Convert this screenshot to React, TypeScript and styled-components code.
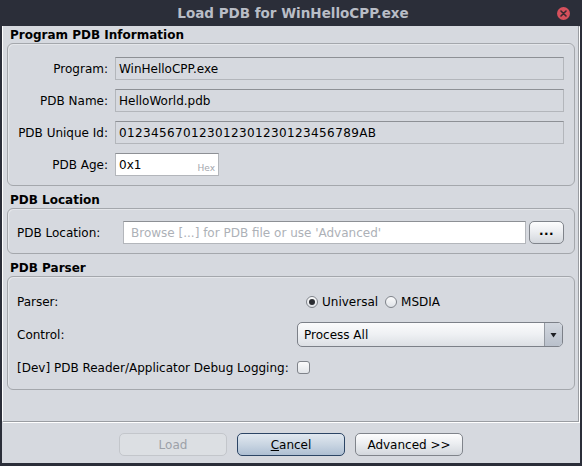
import React from 'react';
import styled, { createGlobalStyle, css } from 'styled-components';

const PANEL_BG = '#d6d9df';

const GlobalStyle = createGlobalStyle`
  html, body {
    margin: 0;
    padding: 0;
    background: #2b2e39;
    overflow: hidden;
  }
  body {
    font-family: "DejaVu Sans", "Liberation Sans", sans-serif;
    font-size: 12px;
    color: #000;
  }
`;

const Window = styled.div`
  width: 582px;
  height: 466px;
  box-sizing: border-box;
  padding: 0 2px 3px 2px;
  background: #2b2e39;
  display: flex;
  flex-direction: column;
`;

const TitleBar = styled.div`
  position: relative;
  flex: none;
  height: 26px;
  display: flex;
  align-items: center;
  justify-content: center;
  padding-left: 4px;
  color: #b9bdc6;
  font-weight: bold;
  font-size: 13.5px;
`;

const CloseButton = styled.div`
  position: absolute;
  right: 10px;
  top: 7px;
  width: 13px;
  height: 13px;
  border-radius: 50%;
  background: #d6505c;
  display: flex;
  align-items: center;
  justify-content: center;
`;

const Body = styled.div`
  flex: 1;
  background: ${PANEL_BG};
  display: flex;
  flex-direction: column;
`;

const Content = styled.div`
  width: 577px;
  height: 396px;
  box-sizing: border-box;
  border-left: 1px solid #fff;
  border-right: 1px solid #9a9da2;
  border-bottom: 1px solid #9a9da2;
  box-shadow: 1px 1px 0 #fff;
  padding: 0 3px 0 4px;
  display: flex;
  flex-direction: column;
`;

const Section = styled.div`
  display: flex;
  flex-direction: column;
  & + & {
    margin-top: 5px;
  }
`;

const SectionTitle = styled.div`
  height: 17px;
  line-height: 18px;
  padding-left: 3px;
  font-weight: bold;
`;

const Panel = styled.div<{ $padTop: number }>`
  border: 1px solid #a4a7ac;
  border-radius: 6px;
  padding: ${(p) => p.$padTop}px 10px 9px 9px;
  box-shadow: inset 1px 1px 0 rgba(255, 255, 255, 0.35);
`;

const InfoGrid = styled.div`
  display: grid;
  grid-template-columns: 91px 1fr;
  column-gap: 7px;
  row-gap: 9px;
  align-items: center;
`;

const Label = styled.div<{ $align?: 'left' | 'right' }>`
  text-align: ${(p) => p.$align ?? 'left'};
  white-space: nowrap;
  padding-top: 1px;
`;

const fieldBase = css`
  height: 23px;
  box-sizing: border-box;
  border: 1px solid #b3b6bb;
  border-top-color: #8d9095;
  padding: 1px 3px 0 3px;
  line-height: 21px;
  white-space: nowrap;
  overflow: hidden;
`;

const ReadOnlyField = styled.div<{ $digits?: boolean }>`
  ${fieldBase};
  background: transparent;
  letter-spacing: ${(p) => (p.$digits ? '0.37px' : 'normal')};
`;

const AgeField = styled.div`
  ${fieldBase};
  position: relative;
  width: 104px;
  background: #fff;
`;

const HexHint = styled.span`
  position: absolute;
  right: 3px;
  bottom: 1px;
  font-size: 9px;
  line-height: 12px;
  color: #a3a7ae;
`;

const LocationRow = styled.div`
  display: flex;
  align-items: center;
  gap: 3px;
`;

const LocationLabel = styled.div`
  width: 106px;
  flex: none;
  margin-right: -3px;
  padding-top: 1px;
`;

const PathField = styled.div`
  ${fieldBase};
  flex: 1;
  background: #fff;
  padding-left: 7px;
  color: #adb1b7;
`;

const buttonLook = css`
  box-sizing: border-box;
  border: 1px solid #80848b;
  border-radius: 5px;
  background: linear-gradient(#fdfdfe 0%, #eceef1 45%, #d3d7dd 100%);
  font-family: inherit;
  font-size: 12px;
  color: #000;
  display: flex;
  align-items: center;
  justify-content: center;
  padding: 0;
`;

const BrowseButton = styled.div`
  ${buttonLook};
  width: 35px;
  height: 23px;
  font-weight: bold;
  letter-spacing: 0.5px;
  padding-bottom: 3px;
`;

const ParserGrid = styled.div`
  display: grid;
  grid-template-columns: 280px 1fr;
  grid-auto-rows: 25px;
  row-gap: 8px;
  align-items: center;
  padding-right: 1px;
`;

const RadioGroup = styled.div`
  display: flex;
  align-items: center;
  gap: 7px;
  padding-left: 9px;
  padding-top: 1px;
`;

const RadioOption = styled.div`
  display: flex;
  align-items: center;
  gap: 4px;
`;

const RadioCircle = styled.div<{ $checked?: boolean }>`
  width: 12px;
  height: 12px;
  box-sizing: border-box;
  border-radius: 50%;
  border: 1px solid #7f838a;
  background: linear-gradient(#fbfbfc, #dfe2e7);
  display: flex;
  align-items: center;
  justify-content: center;
  &::after {
    content: '';
    display: ${(p) => (p.$checked ? 'block' : 'none')};
    width: 6px;
    height: 6px;
    border-radius: 50%;
    background: #2a2c31;
  }
`;

const Combo = styled.div`
  height: 25px;
  box-sizing: border-box;
  border: 1px solid #7c8088;
  border-radius: 5px;
  display: flex;
  overflow: hidden;
  background: linear-gradient(#fbfbfc 0%, #eef0f3 50%, #dcdfe4 100%);
`;

const ComboText = styled.div`
  flex: 1;
  padding-left: 6px;
  padding-top: 1px;
  line-height: 23px;
`;

const ComboArrow = styled.div`
  width: 17px;
  border-left: 1px solid #9499a1;
  background: linear-gradient(#d2d7df 0%, #b9c0cb 100%);
  display: flex;
  align-items: center;
  justify-content: center;
`;

const CheckBox = styled.div`
  width: 13px;
  height: 13px;
  box-sizing: border-box;
  border: 1px solid #7f838a;
  border-radius: 3px;
  background: linear-gradient(#fbfbfc, #e2e5e9);
`;

const ButtonBar = styled.div`
  margin-top: 1px;
  flex: 1;
  display: flex;
  justify-content: center;
  gap: 10px;
  padding-top: 10px;
  box-sizing: border-box;
`;

const DialogButton = styled.button<{ $variant?: 'default' | 'disabled' }>`
  ${buttonLook};
  width: 108px;
  height: 23px;
  padding-top: 1px;
  ${(p) =>
    p.$variant === 'default' &&
    css`
      border-color: #2c4565;
      background: linear-gradient(#e1e8f0 0%, #c9d5e2 50%, #aebfd3 100%);
    `}
  ${(p) =>
    p.$variant === 'disabled' &&
    css`
      border-color: #c3c6cb;
      background: #dcdfe3;
      color: #9da1a8;
    `}
`;

const Mnemonic = styled.span`
  text-decoration: underline;
`;

const App: React.FC = () => (
  <>
    <GlobalStyle />
    <Window>
      <TitleBar>
        Load PDB for WinHelloCPP.exe
        <CloseButton>
          <svg width="7" height="7" viewBox="0 0 7 7">
            <path d="M1 1L6 6M6 1L1 6" stroke="#3b2a31" strokeWidth="1.6" strokeLinecap="round" />
          </svg>
        </CloseButton>
      </TitleBar>
      <Body>
        <Content>
          <Section>
            <SectionTitle>Program PDB Information</SectionTitle>
            <Panel $padTop={13}>
              <InfoGrid>
                <Label $align="right">Program:</Label>
                <ReadOnlyField>WinHelloCPP.exe</ReadOnlyField>
                <Label $align="right">PDB Name:</Label>
                <ReadOnlyField>HelloWorld.pdb</ReadOnlyField>
                <Label $align="right">PDB Unique Id:</Label>
                <ReadOnlyField $digits>012345670123012301230123456789AB</ReadOnlyField>
                <Label $align="right">PDB Age:</Label>
                <AgeField>
                  0x1
                  <HexHint>Hex</HexHint>
                </AgeField>
              </InfoGrid>
            </Panel>
          </Section>
          <Section>
            <SectionTitle>PDB Location</SectionTitle>
            <Panel $padTop={12}>
              <LocationRow>
                <LocationLabel>PDB Location:</LocationLabel>
                <PathField>Browse [...] for PDB file or use 'Advanced'</PathField>
                <BrowseButton>...</BrowseButton>
              </LocationRow>
            </Panel>
          </Section>
          <Section>
            <SectionTitle>PDB Parser</SectionTitle>
            <Panel $padTop={12}>
              <ParserGrid>
                <Label>Parser:</Label>
                <RadioGroup>
                  <RadioOption>
                    <RadioCircle $checked />
                    Universal
                  </RadioOption>
                  <RadioOption>
                    <RadioCircle />
                    MSDIA
                  </RadioOption>
                </RadioGroup>
                <Label>Control:</Label>
                <Combo>
                  <ComboText>Process All</ComboText>
                  <ComboArrow>
                    <svg width="7" height="6" viewBox="0 0 7 6">
                      <path d="M0.5 1H6.5L3.5 5.5Z" fill="#1d1f24" />
                    </svg>
                  </ComboArrow>
                </Combo>
                <Label>[Dev] PDB Reader/Applicator Debug Logging:</Label>
                <CheckBox />
              </ParserGrid>
            </Panel>
          </Section>
        </Content>
        <ButtonBar>
          <DialogButton $variant="disabled">Load</DialogButton>
          <DialogButton $variant="default">
            <Mnemonic>C</Mnemonic>ancel
          </DialogButton>
          <DialogButton>Advanced &gt;&gt;</DialogButton>
        </ButtonBar>
      </Body>
    </Window>
  </>
);

export default App;
